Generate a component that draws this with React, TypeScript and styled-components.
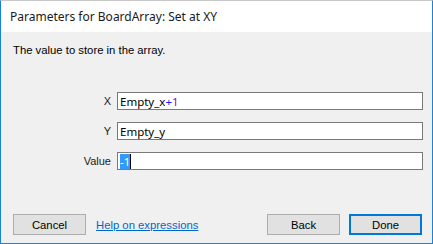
import React from "react"
import styled, { createGlobalStyle } from "styled-components"

const Global = createGlobalStyle`
  html, body { margin: 0; padding: 0; background: #ffffff; }
  body { font-family: "Liberation Sans", Arial, sans-serif; }
`

const Window = styled.div`
  box-sizing: border-box;
  width: 433px;
  height: 244px;
  border: 1px solid #1883d7;
  border-top-color: #c9c9c9;
  display: flex;
  flex-direction: column;
  background: #f0f0f0;
`

const TitleBar = styled.div`
  height: 31px;
  background: #ffffff;
  display: flex;
  align-items: center;
  padding-left: 9px;
  font-family: "Noto Sans", "Liberation Sans", sans-serif;
  font-size: 12px;
  color: #1a1a1a;
`

const Body = styled.div`
  flex: 1;
  display: flex;
  flex-direction: column;
  padding: 11px 10px 8px 12px;
  font-size: 11.3px;
  color: #000000;
`

const Description = styled.p`
  margin: 0;
  height: 14px;
  line-height: 14px;
`

const Form = styled.div`
  margin-top: 35px;
  display: grid;
  grid-template-columns: 98px 306px;
  column-gap: 6px;
  row-gap: 12px;
  align-items: center;
`

const Label = styled.label`
  text-align: right;
  color: #1a1a1a;
  font-size: 11px;
`

const Field = styled.div`
  box-sizing: border-box;
  height: 18px;
  border: 1px solid #7a7a7a;
  background: #ffffff;
  display: flex;
  align-items: center;
  padding-left: 2px;
  font-family: "Noto Sans", "Liberation Sans", sans-serif;
  font-size: 11.5px;
  color: #000000;
  white-space: pre;
`

const Tok = styled.span<{ $c: string }>`
  color: ${(p) => p.$c};
`

const Selected = styled.span`
  background: #3399ff;
  color: #ffffff;
  line-height: 15px;
`

const Caret = styled.span`
  display: inline-block;
  width: 1px;
  height: 15px;
  background: #000000;
`

const Spacer = styled.div`
  flex: 1;
`

const Footer = styled.div`
  display: flex;
  align-items: center;
`

const Button = styled.button<{ $default?: boolean }>`
  box-sizing: border-box;
  width: 73px;
  height: 21px;
  margin: 0;
  padding: 0;
  background: #e1e1e1;
  border: ${(p) => (p.$default ? "2px solid #0078d7" : "1px solid #adadad")};
  font-family: "Liberation Sans", Arial, sans-serif;
  font-size: 11.3px;
  color: #000000;
`

const HelpLink = styled.a`
  margin-left: 10px;
  color: #0066cc;
  text-decoration: underline;
  font-size: 11.3px;
`

const Grow = styled.div`
  flex: 1;
`

const ButtonGap = styled.div`
  width: 9px;
`

export default function App() {
  return (
    <>
      <Global />
      <Window>
        <TitleBar>Parameters for BoardArray: Set at XY</TitleBar>
        <Body>
          <Description>The value to store in the array.</Description>
          <Form>
            <Label>X</Label>
            <Field>
              Empty_x<Tok $c="#1a1aff">+</Tok>
              <Tok $c="#9900cc">1</Tok>
            </Field>
            <Label>Y</Label>
            <Field>Empty_y</Field>
            <Label>Value</Label>
            <Field>
              <Selected>-1</Selected>
              <Caret />
            </Field>
          </Form>
          <Spacer />
          <Footer>
            <Button>Cancel</Button>
            <HelpLink href="#">Help on expressions</HelpLink>
            <Grow />
            <Button>Back</Button>
            <ButtonGap />
            <Button $default>Done</Button>
          </Footer>
        </Body>
      </Window>
    </>
  )
}
